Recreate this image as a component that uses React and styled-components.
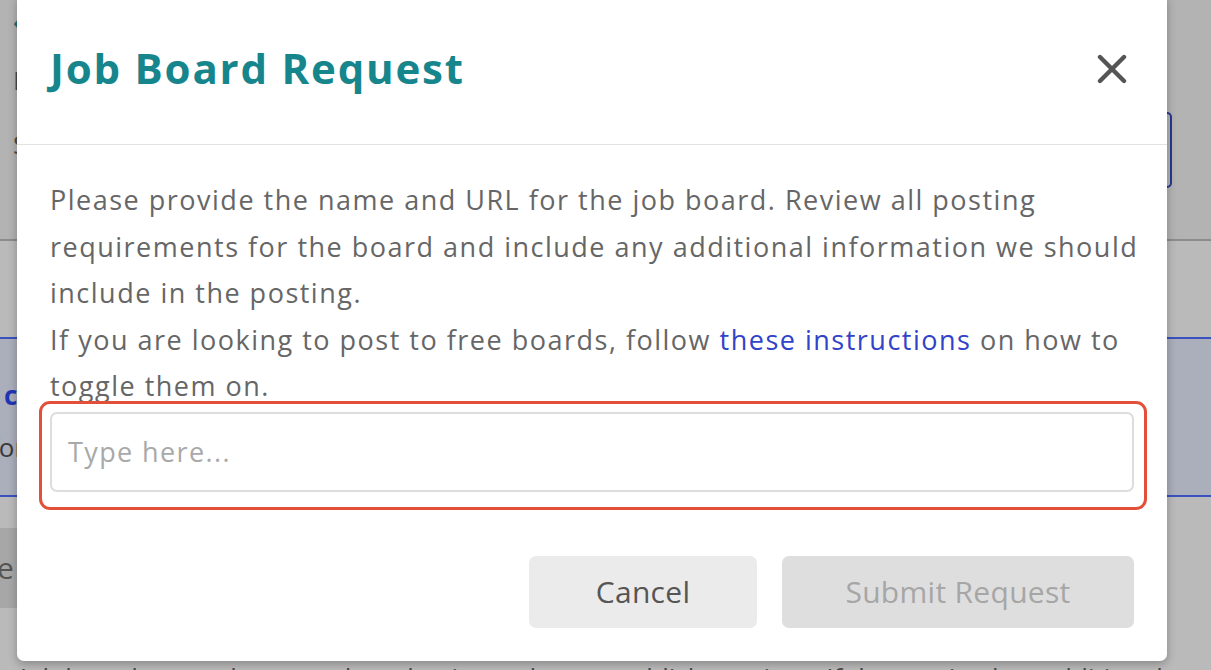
import React from "react";
import styled, { createGlobalStyle } from "styled-components";

const Global = createGlobalStyle`
  html, body { margin: 0; padding: 0; }
  body { font-family: "Open Sans", "Liberation Sans", sans-serif; background: #b3b3b3; }
  * { box-sizing: border-box; }
`;

const Screen = styled.div`
  position: relative;
  width: 1211px;
  height: 670px;
  overflow: hidden;
  background: #bababa;
`;

/* ---------- underlying (dimmed) page ---------- */
const Page = styled.div`
  display: flex;
  flex-direction: column;
  width: 100%;
`;

const TopArea = styled.div`
  height: 241px;
  background: #b3b3b3;
  display: flex;
  justify-content: space-between;
  padding: 8px 0 0 13px;
  border-bottom: 2px solid #8c8c8c;
`;

const TopLeft = styled.div`
  display: flex;
  flex-direction: column;
  gap: 28px;
  font-size: 26px;
  color: #4a4a4a;
`;

const TealMark = styled.span`
  color: #17707a;
  font-weight: 700;
  font-size: 22px;
  line-height: 26px;
`;

const FieldEdge = styled.div`
  width: 200px;
  height: 76px;
  margin: 104px 39px 0 0;
  border: 2px solid #27388f;
  border-radius: 5px;
`;

const Gap = styled.div`
  height: ${(p) => p.h}px;
`;

const Band = styled.div`
  height: 160px;
  background: #abaebb;
  border-top: 2px solid #3a51bf;
  border-bottom: 2px solid #3a51bf;
  display: flex;
  flex-direction: column;
  padding-top: 36px;
  gap: 12px;
  font-size: 26px;
  line-height: 40px;
`;

const BandLink = styled.span`
  color: #1f36b5;
  font-weight: 700;
  margin-left: 4px;
`;

const BandText = styled.span`
  color: #3a3a3a;
  margin-left: -10px;
`;

const GreyBox = styled.div`
  height: 80px;
  width: 200px;
  background: #a7a7a7;
  color: #555;
  font-size: 30px;
  line-height: 80px;
  margin-left: -3px;
`;

const BottomText = styled.div`
  margin-top: 54px;
  padding-left: 20px;
  font-size: 26px;
  line-height: 30px;
  color: #4a4a4a;
  white-space: nowrap;
`;

/* ---------- modal ---------- */
const Modal = styled.div`
  position: absolute;
  left: 17px;
  top: -6px;
  width: 1150px;
  background: #fff;
  border-radius: 7px;
  box-shadow: 0 3px 10px rgba(0, 0, 0, 0.28);
  display: flex;
  flex-direction: column;
`;

const Header = styled.div`
  height: 151px;
  padding: 0 33px 0 33px;
  display: flex;
  align-items: center;
  justify-content: space-between;
  border-bottom: 1px solid #e2e2e2;
`;

const Title = styled.h1`
  margin: 0;
  margin-top: -4px;
  font-size: 42px;
  font-weight: 700;
  color: #17858c;
  letter-spacing: 1.8px;
`;

const CloseBtn = styled.button`
  width: 32px;
  height: 32px;
  padding: 0;
  margin-right: 6px;
  border: 0;
  background: none;
  display: flex;
  align-items: center;
  justify-content: center;
`;

const Body = styled.div`
  padding: 32px 33px 33px 33px;
  display: flex;
  flex-direction: column;
`;

const Text = styled.p`
  margin: 0 -16px 0 0;
  font-size: 27px;
  line-height: 46.5px;
  letter-spacing: 1.5px;
  color: #666666;
`;

const Link = styled.a`
  color: #3043c9;
  text-decoration: none;
`;

const InputWrap = styled.div`
  position: relative;
  margin-top: 2px;
  &::after {
    content: "";
    position: absolute;
    top: -11px;
    left: -11px;
    right: -13px;
    bottom: -18px;
    border: 3px solid #e2503a;
    border-radius: 11px;
    pointer-events: none;
  }
`;

const Input = styled.input`
  display: block;
  width: 100%;
  height: 80px;
  padding: 0 16px;
  border: 2px solid #dddddd;
  border-radius: 7px;
  font-family: inherit;
  font-size: 27px;
  letter-spacing: 1.4px;
  color: #555;
  outline: none;
  &::placeholder { color: #a9a9a9; }
`;

const Footer = styled.div`
  margin-top: 64px;
  display: flex;
  justify-content: flex-end;
  gap: 25px;
`;

const Button = styled.button`
  width: ${(p) => p.$w}px;
  height: 72px;
  padding: 0;
  border: 0;
  border-radius: 7px;
  font-family: inherit;
  font-size: 30px;
  letter-spacing: 0.3px;
  background: ${(p) => (p.$disabled ? "#dedede" : "#ebebeb")};
  color: ${(p) => (p.$disabled ? "#a6a6a6" : "#555555")};
`;

export default function App() {
  return (
    <>
      <Global />
      <Screen>
        <Page>
          <TopArea>
            <TopLeft>
              <TealMark>‹ Back</TealMark>
              <span>Indeed</span>
              <span>Sponsored</span>
            </TopLeft>
            <FieldEdge />
          </TopArea>
          <Gap h={96} />
          <Band>
            <BandLink>c</BandLink>
            <BandText>for</BandText>
          </Band>
          <Gap h={31} />
          <GreyBox>e</GreyBox>
          <BottomText>
            Job boards can take up to three business days to publish postings. If the posting has additional costs, you will be notified.
          </BottomText>
        </Page>

        <Modal role="dialog" aria-label="Job Board Request">
          <Header>
            <Title>Job Board Request</Title>
            <CloseBtn aria-label="Close">
              <svg width="30" height="30" viewBox="0 0 30 30">
                <path d="M3 3 L27 27 M27 3 L3 27" stroke="#555" strokeWidth="4.4" strokeLinecap="round" />
              </svg>
            </CloseBtn>
          </Header>
          <Body>
            <Text>
              Please provide the name and URL for the job board. Review all posting requirements for the board and include any additional information we should include in the posting.
            </Text>
            <Text>
              If you are looking to post to free boards, follow <Link href="#">these instructions</Link> on how to toggle them on.
            </Text>
            <InputWrap>
              <Input placeholder="Type here..." />
            </InputWrap>
            <Footer>
              <Button $w={228}>Cancel</Button>
              <Button $w={352} $disabled>Submit Request</Button>
            </Footer>
          </Body>
        </Modal>
      </Screen>
    </>
  );
}
